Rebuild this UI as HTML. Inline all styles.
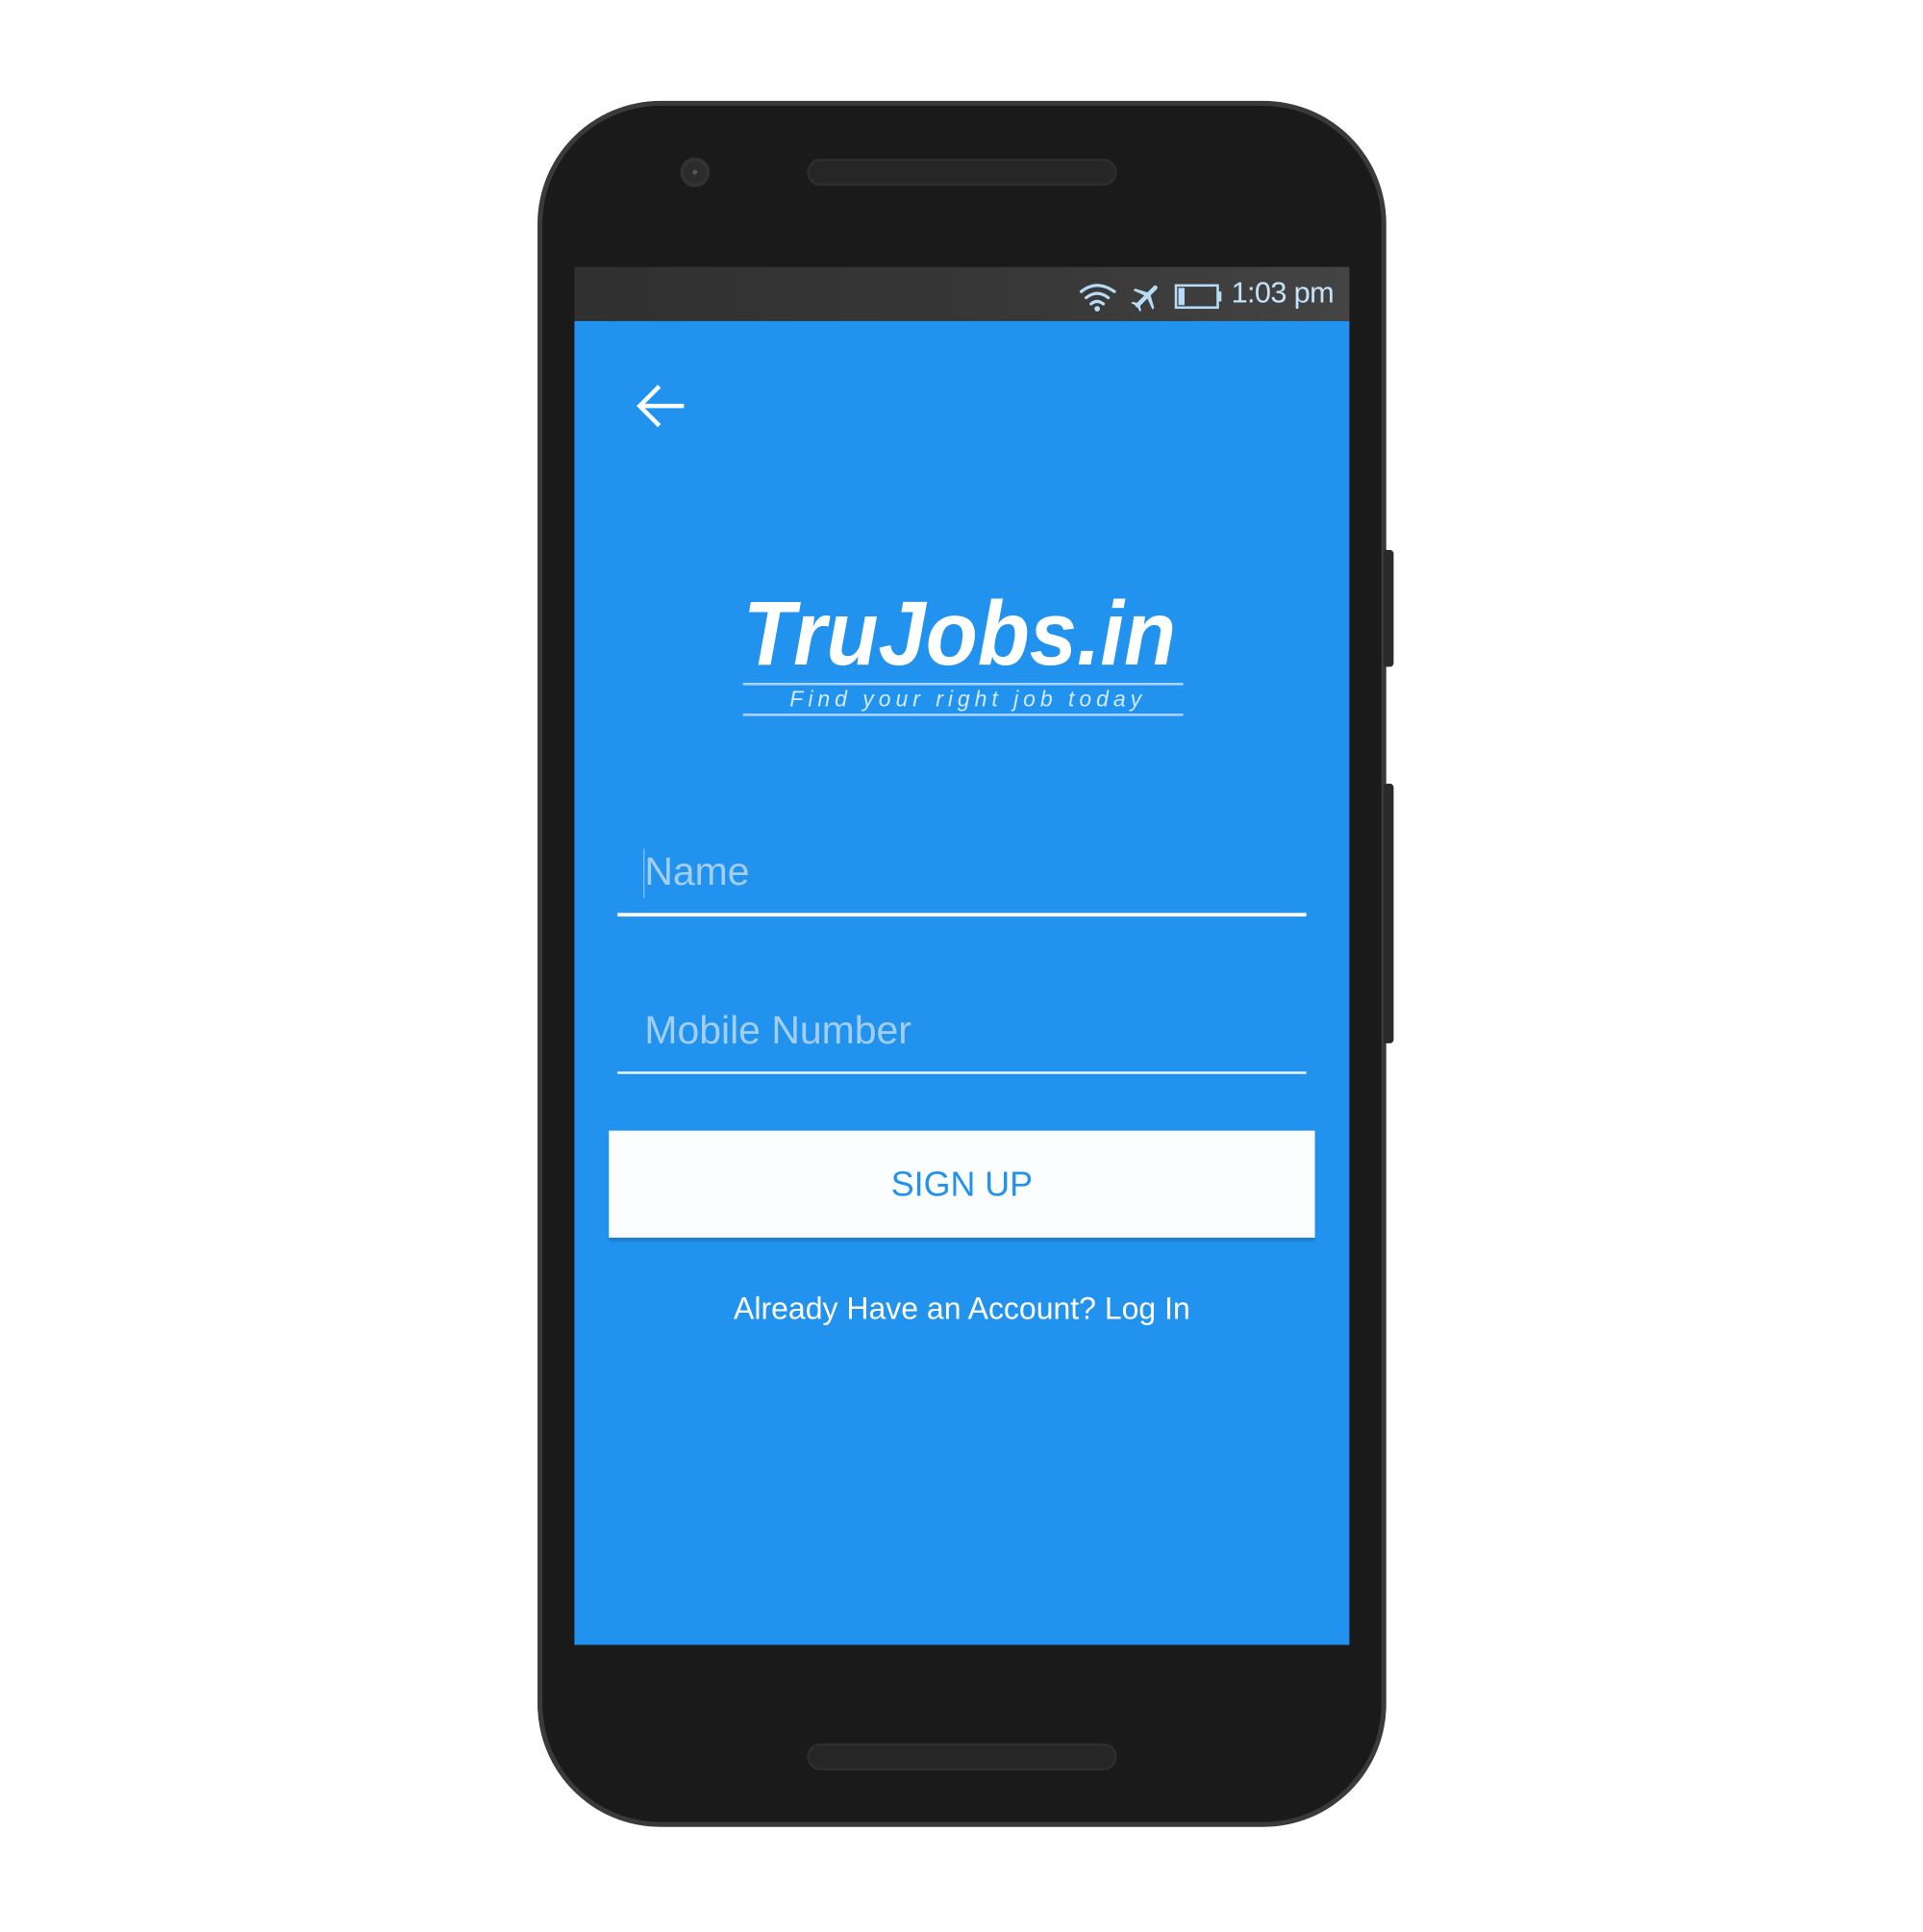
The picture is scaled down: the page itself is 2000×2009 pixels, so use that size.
<!DOCTYPE html>
<html><head><meta charset="utf-8"><style>
html,body{margin:0;padding:0;background:#fff;width:2000px;height:2000px;overflow:hidden}
#w{position:absolute;left:0;top:0;width:1570px;height:1570px;transform:scale(1.2793);transform-origin:0 0;font-family:"Liberation Sans",sans-serif}
.a{position:absolute}
</style></head><body><div id="w">
<div class="a" style="left:437px;top:82px;width:690px;height:1403px;border-radius:100px;background:#3a3a3a"></div>
<div class="a" style="left:441px;top:86px;width:682px;height:1395px;border-radius:96px;background:#1a1a1a"></div>
<div class="a" style="left:1125px;top:447px;width:8px;height:95px;background:#2a2a2a;border-radius:0 3px 3px 0"></div>
<div class="a" style="left:1125px;top:637px;width:8px;height:211px;background:#2a2a2a;border-radius:0 3px 3px 0"></div>
<div class="a" style="left:553px;top:128px;width:24px;height:24px;border-radius:50%;background:#2c2c2c;box-shadow:inset 0 0 0 3px #333"></div>
<div class="a" style="left:563px;top:138px;width:4px;height:4px;border-radius:50%;background:#555"></div>
<div class="a" style="left:656px;top:129px;width:252px;height:22px;border-radius:11px;background:#262626;box-shadow:inset 0 0 0 2px #2e2e2e"></div>
<div class="a" style="left:656px;top:1417px;width:252px;height:22px;border-radius:11px;background:#262626;box-shadow:inset 0 0 0 2px #2e2e2e"></div>
<div class="a" style="left:467px;top:217px;width:630px;height:44px;background:linear-gradient(90deg,#303030,#383838 60%,#444)"></div>
<div class="a" style="left:467px;top:261px;width:630px;height:1076px;background:#2193ef"></div>
<svg class="a" style="left:870px;top:222px" width="130" height="36" viewBox="0 0 130 36">
<g fill="none" stroke="#b8dcf7" stroke-width="2.5" stroke-linecap="round">
<path d="M9 15 Q22 5 36 15"/><path d="M13 20 Q22 13 31 20"/><path d="M17 25 Q22 21 27 25"/>
</g><circle cx="22" cy="29" r="2.2" fill="#b8dcf7"/>
<g transform="translate(62 19) rotate(45)" fill="#b8dcf7">
<rect x="-1.8" y="-12" width="3.6" height="24" rx="1.8"/>
<path d="M-11 2 L0 -4 L11 2 L11 4 L0 0 L-11 4Z"/>
<path d="M-5 11 L0 8 L5 11 L5 12.5 L0 11 L-5 12.5Z"/>
</g>
<rect x="86" y="10" width="34" height="18" fill="none" stroke="#b8dcf7" stroke-width="2"/>
<rect x="120" y="15" width="3" height="8" fill="#b8dcf7"/>
<rect x="88" y="12" width="5" height="14" fill="#b8dcf7"/>
</svg>
<div class="a" style="left:1001px;top:225px;font-size:24px;color:#c4e2f8;letter-spacing:-0.5px">1:03 pm</div>
<svg class="a" style="left:512px;top:306px" width="50" height="48"><path d="M44 24 H10 M24 8 L8 24 L24 40" fill="none" stroke="#fff" stroke-width="3.5"/></svg>
<svg class="a" style="left:590px;top:470px" width="390" height="120">
<text x="14" y="70" font-family="Liberation Sans" font-weight="bold" font-style="italic" font-size="74" fill="#fff" textLength="352" lengthAdjust="spacingAndGlyphs">TruJobs.in</text>
<rect x="14" y="85" width="358" height="2" fill="#a9d3f6"/>
<rect x="14" y="110" width="358" height="2" fill="#a9d3f6"/>
<text x="52" y="104" font-family="Liberation Sans" font-style="italic" font-size="18" fill="#d4eafb" textLength="286" lengthAdjust="spacing">Find your right job today</text>
</svg>
<div class="a" style="left:523px;top:690px;width:1px;height:40px;background:#8fc2ee"></div>
<div class="a" style="left:524px;top:690px;font-size:32px;color:#a3cdf1">Name</div>
<div class="a" style="left:502px;top:742px;width:560px;height:3px;background:#fff"></div>
<div class="a" style="left:524px;top:819px;font-size:32px;color:#a3cdf1">Mobile Number</div>
<div class="a" style="left:502px;top:871px;width:560px;height:2px;background:#e8f3fd"></div>
<div class="a" style="left:495px;top:919px;width:574px;height:87px;background:#fcfdff;box-shadow:0 3px 2px #1c7fd0;text-align:center;line-height:87px;font-size:28px;color:#2193ef">SIGN UP</div>
<div class="a" style="left:467px;top:1050px;width:630px;text-align:center;font-size:25px;color:#fff">Already Have an Account? Log In</div>
</div></body></html>
